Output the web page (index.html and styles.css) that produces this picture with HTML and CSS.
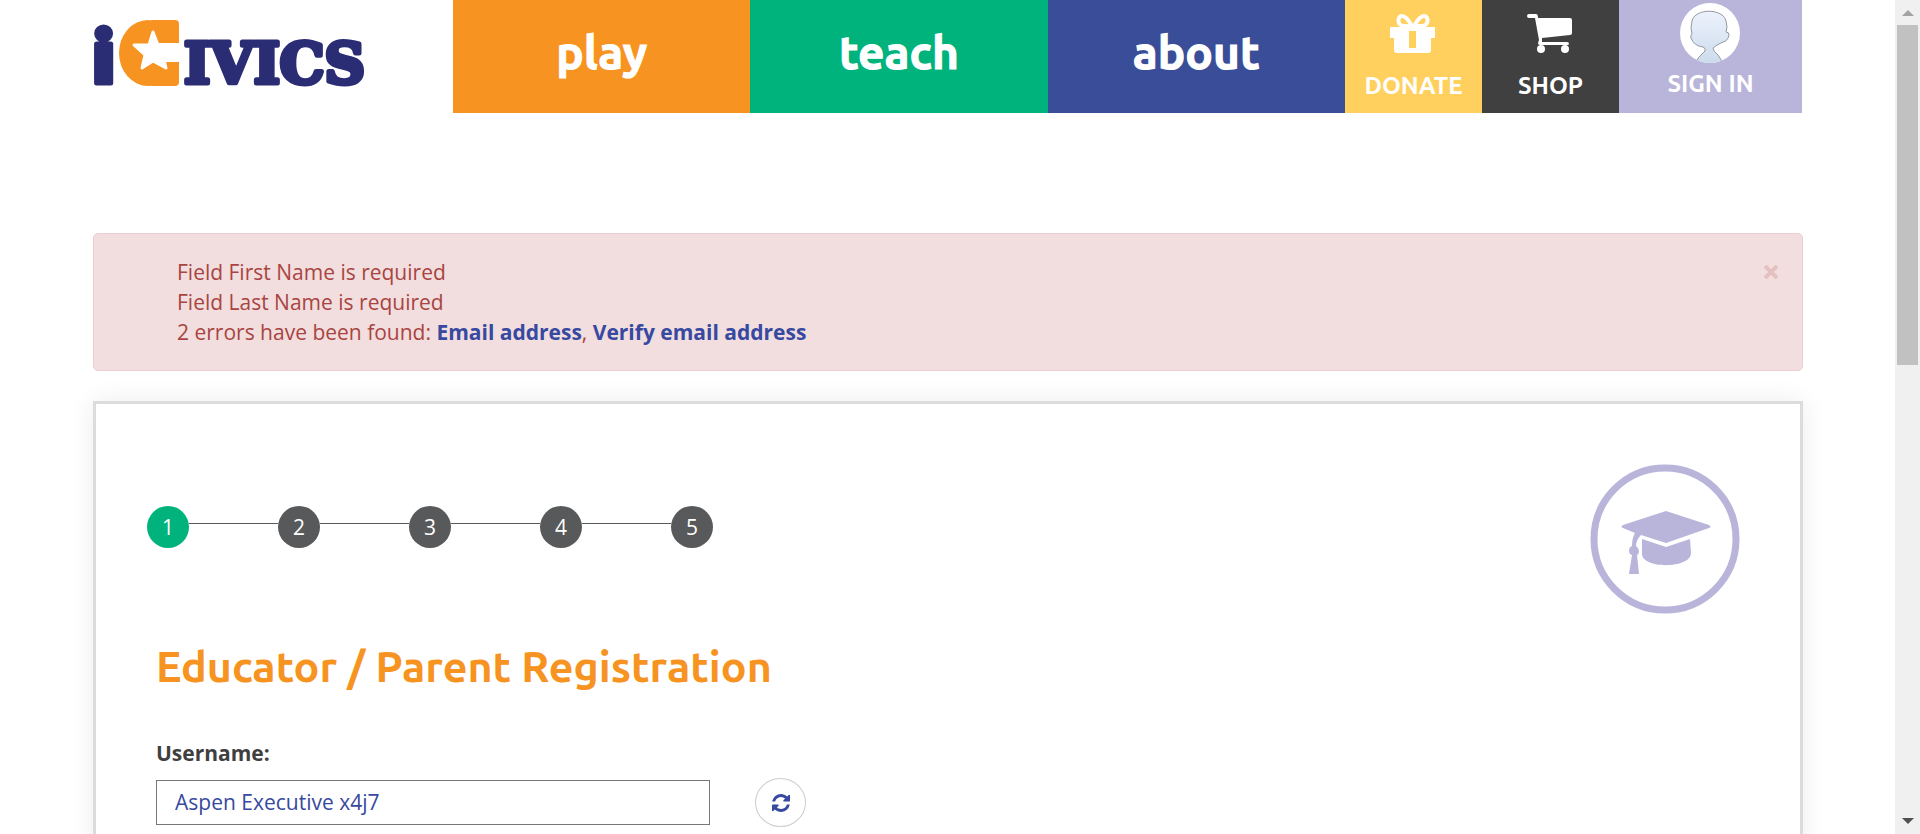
FILE: index.html
```html
<!DOCTYPE html>
<html lang="en">
<head>
<meta charset="utf-8">
<title>Educator / Parent Registration | iCivics</title>
<link rel="stylesheet" href="styles.css">
</head>
<body>
<div class="viewport">
  <div class="container">
    <header class="header">
      <a class="logo" href="#" aria-label="iCivics home">
        <svg class="logo-art" viewBox="0 0 282 68" aria-hidden="true">
          <text class="logo-text logo-lead" x="0" y="64">i</text>
          <rect class="logo-mark" x="26" y="1" width="58" height="66" rx="33" ry="33"/>
          <rect class="logo-mark" x="56" y="1" width="30" height="66" rx="4"/>
          <rect class="logo-cut" x="62" y="24" width="25" height="19"/>
          <polygon class="logo-star" points="60,13 65,26 76,26 70,36 73,49 60,42 49,49 52,36 41,26 56,26"/>
          <text class="logo-text logo-rest" x="91" y="64">IVICS</text>
        </svg>
      </a>
      <nav class="nav" aria-label="Main">
        <a class="nav-main nav-play" href="#">play</a>
        <a class="nav-main nav-teach" href="#">teach</a>
        <a class="nav-main nav-about" href="#">about</a>
        <a class="nav-side nav-donate" href="#">
          <svg class="nav-icon" viewBox="0 0 46 40" aria-hidden="true">
            <path fill="none" stroke="#fff" stroke-width="4" d="M22 12C18 5 15 2 12 2C7 2 7 12 14 12ZM24 12C28 5 31 2 34 2C39 2 39 12 32 12Z"/>
            <path fill="#fff" fill-rule="evenodd" d="M0 13H45V24H41V36Q41 39 38 39H7Q4 39 4 36V24H0ZM19 17V34H26V17Z"/>
          </svg>
          <span>DONATE</span>
        </a>
        <a class="nav-side nav-shop" href="#">
          <svg class="nav-icon" viewBox="0 0 46 40" aria-hidden="true">
            <path fill="#fff" d="M2 0H9Q11 0 11 4H43Q45 4 45 6V19Q45 21 43 21L15 24V28H40Q42 28 42 30Q42 31 40 31H13Q11 31 11 29L12 26L8 4H2Q0 4 0 2Q0 0 2 0Z"/>
            <circle cx="14" cy="35" r="4" fill="#fff"/><circle cx="38" cy="35" r="4" fill="#fff"/>
          </svg>
          <span>SHOP</span>
        </a>
        <a class="nav-side nav-signin" href="#">
          <svg class="avatar" viewBox="0 0 60 60" aria-hidden="true">
            <defs>
              <linearGradient id="face" x1="0" y1="0" x2="0" y2="1"><stop offset="0" stop-color="#edf3fd"/><stop offset="1" stop-color="#cbdaec"/></linearGradient>
              <clipPath id="round"><circle cx="30" cy="30" r="30"/></clipPath>
            </defs>
            <circle cx="30" cy="30" r="30" fill="#fff"/>
            <path clip-path="url(#round)" fill="url(#face)" stroke="#92989f" d="M15 62Q17 54 25 48Q26 45 23 44Q14 43 11 35Q10 32 12 31Q10 25 12 18C15 5 43 5 46 18Q48 24 46 29Q49 29 49 32Q48 38 43 39Q36 42 33 45Q33 48 38 52Q42 57 43 62Z"/>
          </svg>
          <span>SIGN IN</span>
        </a>
      </nav>
    </header>

    <main>
      <section class="alert" role="alert">
        <div>
          <p>Field First Name is required</p>
          <p>Field Last Name is required</p>
          <p>2 errors have been found: <a href="#">Email address</a>, <a href="#">Verify email address</a></p>
        </div>
        <button class="alert-close" type="button" aria-label="Close">
          <svg viewBox="0 0 14 14" aria-hidden="true"><path stroke="#e4c0c0" stroke-width="4" d="M1 1L13 13M13 1L1 13"/></svg>
        </button>
      </section>

      <section class="card">
        <div class="card-top">
          <ol class="steps">
            <li class="step step-active">1</li>
            <li class="step">2</li>
            <li class="step">3</li>
            <li class="step">4</li>
            <li class="step">5</li>
          </ol>
          <svg class="role" viewBox="0 0 150 150" aria-hidden="true">
            <circle cx="75" cy="75" r="71" fill="none" stroke="#b9b4da" stroke-width="7"/>
            <path fill="#b9b4da" d="M76 47L119 61Q122 63 119 64L76 79L51 71Q46 76 46 82Q49 84 49 87Q49 90 47 91L49 110H39L42 91Q39 90 39 87Q39 83 42 82Q42 74 45 69L33 64Q30 63 33 61Z"/>
            <path fill="#b9b4da" d="M52 75L76 83L100 75L101 89C101 105 52 105 52 90Z"/>
          </svg>
        </div>
        <form class="form">
          <h1>Educator / Parent Registration</h1>
          <label for="username">Username:</label>
          <div class="field">
            <input id="username" type="text" value="Aspen Executive x4j7">
            <button class="refresh" type="button" aria-label="Suggest another username">
              <svg viewBox="0 0 1536 1536" aria-hidden="true"><path fill="#3749a0" d="M1511 928q0 5-1 7-64 268-268 434.500T764 1536q-146 0-282.500-55T238 1324l-129 129q-19 19-45 19t-45-19-19-45V960q0-26 19-45t45-19h448q26 0 45 19t19 45-19 45l-137 137q71 66 161 102t187 36q134 0 250-65t186-179q11-17 53-117 8-23 30-23h192q13 0 22.500 9.500t9.500 22.500zm25-800v448q0 26-19 45t-45 19h-448q-26 0-45-19t-19-45 19-45l138-138Q969 256 768 256q-134 0-250 65T332 500q-11 17-53 117-8 23-30 23H50q-13 0-22.500-9.500T18 608v-7q65-268 270-434.500T768 0q146 0 284 55.500T1297 212l130-129q19-19 45-19t45 19 19 45z"/></svg>
            </button>
          </div>
        </form>
      </section>
    </main>
  </div>
</div>
<div class="scrollbar" aria-hidden="true">
  <span class="arrow arrow-up"></span>
  <span class="thumb"></span>
  <span class="arrow arrow-down"></span>
</div>
</body>
</html>
```
FILE: styles.css
```css
* { box-sizing: border-box; }
body {
  margin: 0;
  height: 100vh;
  overflow: hidden;
  display: grid;
  grid-template-columns: 1fr 25px;
  background: #fff;
  color: #3f3f40;
  font-family: "Open Sans", "Noto Sans", sans-serif;
  font-size: 21px;
  line-height: 30px;
}
p, h1, ol { margin: 0; padding: 0; }
a { text-decoration: none; }
svg { display: block; }
button { padding: 0; cursor: pointer; }
.viewport { height: 100vh; overflow: hidden; padding: 0 92px 0 93px; }
.container { max-width: 1710px; margin: 0 auto; }

.header { display: flex; padding-right: 1px; }
.logo { flex: 0 0 360px; padding-top: 19px; }
.logo-art { width: 282px; overflow: visible; }
.logo-text { fill: #2a2d74; stroke: #2a2d74; stroke-linejoin: round; }
.logo-lead { font-family: Inter, sans-serif; font-weight: 900; font-size: 72px; stroke-width: 5; }
.logo-rest { font-family: "DejaVu Serif", serif; font-weight: 700; font-size: 56px; stroke-width: 5; }
.logo-mark { fill: #f79320; }
.logo-cut { fill: #fff; }
.logo-star { fill: #fff; stroke: #fff; stroke-width: 3; stroke-linejoin: round; }

.nav { flex: 1; display: flex; height: 113px; font-family: Ubuntu, "Noto Sans", sans-serif; font-weight: 700; }
.nav a { color: #fff; }
.nav .nav-main { flex: 1; display: flex; align-items: center; justify-content: center; font-size: 46px; padding-bottom: 9px; -webkit-text-stroke: 1px #fff; }
.nav-side { flex: 0 0 137px; display: flex; flex-direction: column; align-items: center; justify-content: flex-end; gap: 17px; padding-bottom: 12px; font-size: 24px; }
.nav-play { background: #f79320; }
.nav-teach { background: #00b37d; }
.nav-about { background: #394d98; }
.nav-donate { background: #ffd05d; }
.nav-shop { background: #404040; }
.nav .nav-signin { flex-basis: 183px; background: #b9b4da; gap: 6px; padding-bottom: 14px; }
.nav-icon { width: 46px; height: 40px; }
.avatar { width: 60px; height: 60px; }

.alert {
  display: flex;
  justify-content: space-between;
  align-items: flex-start;
  margin: 120px 0 30px;
  padding: 23px 24px 23px 83px;
  border: 1px solid #ebccd1;
  border-radius: 5px;
  background: #f2dede;
  color: #a94442;
}
.alert a { color: #3749a0; font-weight: 700; }
.alert-close { margin-top: 8px; border: 0; background: none; }
.alert-close svg { width: 14px; height: 14px; }

.card { min-height: 600px; padding: 60px 60px 0; border: 3px solid #dcdcdc; box-shadow: 0 0 24px rgba(0, 0, 0, 0.08); }
.card-top { display: flex; justify-content: space-between; align-items: flex-start; margin: 0 0 24px -9px; }
.steps { display: flex; gap: 89px; padding-top: 42px; list-style: none; }
.step { position: relative; width: 42px; height: 42px; border-radius: 50%; background: #58595b; color: #fff; line-height: 42px; text-align: center; }
.step-active { background: #00b37d; }
.step + .step::before { content: ""; position: absolute; right: 100%; top: 17px; width: 89px; height: 1px; background: #58595b; }
.role { width: 150px; height: 150px; }

h1 { color: #f79320; font-family: Ubuntu, "Noto Sans", sans-serif; font-size: 43px; line-height: 56px; font-weight: 700; margin-bottom: 44px; }
label { display: block; font-weight: 700; margin-bottom: 10px; }
.field { display: flex; align-items: center; gap: 45px; }
input { width: 554px; height: 45px; padding: 0 18px 1px; border: 1px solid #777; background: #fff; color: #3749a0; font: inherit; }
.refresh { display: flex; align-items: center; justify-content: center; width: 51px; height: 49px; border: 1px solid #ccc; border-radius: 50%; background: #fff; }
.refresh svg { width: 18px; height: 18px; }

.scrollbar { display: flex; flex-direction: column; align-items: center; padding: 10px 2px; background: #f0f0f0; }
.arrow { border: 6px solid transparent; }
.arrow-up { border-top: 0; border-bottom-color: #a3a3a3; }
.arrow-down { border-bottom: 0; border-top-color: #505050; margin-top: auto; }
.thumb { width: 21px; height: 340px; margin-top: 9px; background: #c1c1c1; }
```
